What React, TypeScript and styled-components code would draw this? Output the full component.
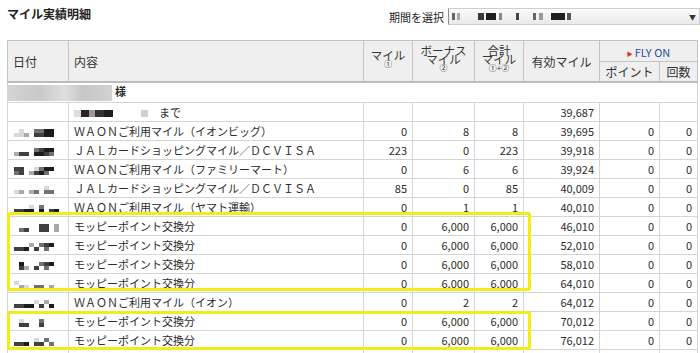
import React from "react";
import styled, { createGlobalStyle } from "styled-components";

const GlobalStyle = createGlobalStyle`
  html, body {
    margin: 0;
    padding: 0;
    background: #fff;
  }
  body {
    font-family: "Noto Sans CJK JP", "Noto Sans", sans-serif;
    color: #2b2b2b;
  }
`;

const SHADES: Record<string, string> = {
  " ": "transparent",
  "1": "#d9d9d9",
  "2": "#a9a9a9",
  "3": "#717171",
  "4": "#404040",
  "5": "#1c1c1c",
};

interface RowType {
  top: string;
  bottom: string;
  text: string;
  mile: string;
  bonus: string;
  total: string;
  valid: string;
}

const rows: Array<RowType> = [
  { top: " 1  3355 ", bottom: "112 4455 ", text: "ＷＡＯＮご利用マイル（イオンビッグ）", mile: "0", bonus: "8", total: "8", valid: "39,695" },
  { top: "    3455 ", bottom: "244 5543 ", text: "ＪＡＬカードショッピングマイル／ＤＣＶＩＳＡ", mile: "223", bonus: "0", total: "223", valid: "39,918" },
  { top: "44  1355 ", bottom: "34 2453  ", text: "ＷＡＯＮご利用マイル（ファミリーマート）", mile: "0", bonus: "6", total: "6", valid: "39,924" },
  { top: "      1  ", bottom: "12 23 33 ", text: "ＪＡＬカードショッピングマイル／ＤＣＶＩＳＡ", mile: "85", bonus: "0", total: "85", valid: "40,009" },
  { top: "   1 3   ", bottom: "4455 5 45", text: "ＷＡＯＮご利用マイル（ヤマト運輸）", mile: "0", bonus: "1", total: "1", valid: "40,010" },
  { top: "     44 2", bottom: " 34  44 2", text: "モッピーポイント交換分", mile: "0", bonus: "6,000", total: "6,000", valid: "46,010" },
  { top: "   2 345 ", bottom: "445 4 3  ", text: "モッピーポイント交換分", mile: "0", bonus: "6,000", total: "6,000", valid: "52,010" },
  { top: " 5   345 ", bottom: " 42 4 3  ", text: "モッピーポイント交換分", mile: "0", bonus: "6,000", total: "6,000", valid: "58,010" },
  { top: "1        ", bottom: " 21 33 2 ", text: "モッピーポイント交換分", mile: "0", bonus: "6,000", total: "6,000", valid: "64,010" },
  { top: "    1 2  ", bottom: "4455 4 5 ", text: "ＷＡＯＮご利用マイル（イオン）", mile: "0", bonus: "2", total: "2", valid: "64,012" },
  { top: " 1   3   ", bottom: " 44  4   ", text: "モッピーポイント交換分", mile: "0", bonus: "6,000", total: "6,000", valid: "70,012" },
  { top: "    1 3  ", bottom: "445 44 3 ", text: "モッピーポイント交換分", mile: "0", bonus: "6,000", total: "6,000", valid: "76,012" },
  { top: " 2  3 44 ", bottom: "23  3 44 ", text: "ＷＡＯＮご利用マイル（イオン）", mile: "0", bonus: "3", total: "3", valid: "76,015" },
];

const Page = styled.div`
  width: 693px;
  padding-left: 7px;
`;

const TitleBar = styled.div`
  height: 40px;
  display: flex;
  justify-content: space-between;
  align-items: flex-start;
`;

const Title = styled.h1`
  margin: 6px 0 0;
  font-size: 12px;
  line-height: 16px;
  font-weight: bold;
  color: #222;
`;

const Period = styled.div`
  margin-top: 8px;
  display: flex;
  align-items: center;
`;

const PeriodLabel = styled.span`
  font-size: 11px;
  line-height: 16px;
  margin-right: 4px;
  color: #222;
`;

const SelectBox = styled.div`
  width: 244px;
  height: 15px;
  display: flex;
  align-items: center;
  padding: 0 3px;
  border: 1px solid #cfcfcf;
  border-left-color: #8d8d8d;
  background: linear-gradient(#fbfbfb, #e9e9e9);
`;

const SelectText = styled.span`
  flex: 1;
  display: flex;
  align-items: center;
`;

const Arrow = styled.span`
  font-size: 7px;
  color: #333;
`;

const Blot = styled.span<{ $w: number; $shade: string; $gap?: number }>`
  display: inline-block;
  width: ${(p) => p.$w}px;
  height: 7px;
  margin-right: ${(p) => p.$gap ?? 0}px;
  background: ${(p) => p.$shade};
  vertical-align: middle;
`;

const Mosaic = styled.span`
  display: inline-grid;
  grid-auto-flow: column;
  grid-template-rows: 4px 4px;
  grid-auto-columns: 5px;
  vertical-align: middle;
`;

const Tile = styled.span<{ $shade: string }>`
  background: ${(p) => p.$shade};
`;

const TableWrap = styled.div`
  position: relative;
  width: 690px;
`;

const Table = styled.table`
  width: 690px;
  border-collapse: collapse;
  table-layout: fixed;
  font-size: 11px;
  border: 1px solid #c4c4c4;
`;

const HeadCell = styled.th<{ $align?: string }>`
  background: #efefef;
  border: 1px solid #c4c4c4;
  border-bottom: 2px solid #bcbcbc;
  padding: 0 5px;
  font-size: 12px;
  font-weight: normal;
  color: #333;
  text-align: ${(p) => p.$align ?? "center"};
  vertical-align: middle;
  white-space: nowrap;
`;

const SubHeadCell = styled(HeadCell)`
  border-bottom: 1px solid #c4c4c4;
  height: 19px;
  padding: 0;
`;

const Stack = styled.span`
  display: inline-flex;
  flex-direction: column;
  align-items: center;
  margin-bottom: 9px;
  font-size: 11.5px;
  line-height: 9px;
`;

const Mark = styled.span`
  font-size: 8px;
  line-height: 8px;
`;

const FlyOn = styled.span`
  color: #2d4c9c;
  font-size: 11px;
`;

const FlyArrow = styled.span`
  color: #d23a2a;
  font-size: 6px;
  margin-right: 2px;
  vertical-align: 1px;
`;

const Row = styled.tr<{ $h: number }>`
  height: ${(p) => p.$h}px;
`;

const Cell = styled.td<{ $num?: boolean }>`
  border: 1px solid #d4d4d4;
  padding: 0 5px;
  text-align: ${(p) => (p.$num ? "right" : "left")};
  white-space: nowrap;
  overflow: hidden;
  line-height: 16px;
  color: #2b2b2b;
`;

const DateCell = styled(Cell)`
  padding-left: 6px;
`;

const NameCell = styled.td`
  border: 1px solid #d4d4d4;
  padding: 0;
  font-weight: bold;
`;

const NameBlur = styled.span`
  display: inline-block;
  width: 104px;
  height: 16px;
  margin-right: 3px;
  vertical-align: middle;
  background: linear-gradient(90deg, #d4d4d4, #c9c9c9 30%, #dedede 55%, #c6c6c6 72%, #d2d2d2);
`;

const Highlight = styled.div<{ $top: number; $height: number }>`
  position: absolute;
  left: 0;
  top: ${(p) => p.$top}px;
  width: 524px;
  height: ${(p) => p.$height}px;
  box-sizing: border-box;
  border: 3px solid #f3ec1c;
  border-radius: 3px;
  pointer-events: none;
`;

const DateBlur: React.FC<{ top: string; bottom: string }> = ({ top, bottom }) => (
  <Mosaic>
    {top.split("").map((c, i) => [
      <Tile key={`t${i}`} $shade={SHADES[c]} />,
      <Tile key={`b${i}`} $shade={SHADES[bottom[i] ?? " "]} />,
    ])}
  </Mosaic>
);

const App: React.FC = () => {
  return (
    <Page>
      <GlobalStyle />
      <TitleBar>
        <Title>マイル実績明細</Title>
        <Period>
          <PeriodLabel>期間を選択</PeriodLabel>
          <SelectBox>
            <SelectText>
              <Blot $w={3} $shade="#666" $gap={2} />
              <Blot $w={3} $shade="#aaa" $gap={18} />
              <Blot $w={6} $shade="#3a3a3a" $gap={2} />
              <Blot $w={10} $shade="#1e1e1e" $gap={3} />
              <Blot $w={3} $shade="#888" $gap={14} />
              <Blot $w={3} $shade="#444" $gap={14} />
              <Blot $w={3} $shade="#666" $gap={3} />
              <Blot $w={4} $shade="#999" $gap={8} />
              <Blot $w={14} $shade="#1e1e1e" $gap={2} />
              <Blot $w={4} $shade="#555" />
            </SelectText>
            <Arrow>▼</Arrow>
          </SelectBox>
        </Period>
      </TitleBar>
      <TableWrap>
        <Table>
          <colgroup>
            <col style={{ width: 61 }} />
            <col style={{ width: 295 }} />
            <col style={{ width: 49 }} />
            <col style={{ width: 62 }} />
            <col style={{ width: 49 }} />
            <col style={{ width: 76 }} />
            <col style={{ width: 60 }} />
            <col style={{ width: 38 }} />
          </colgroup>
          <thead>
            <Row $h={21}>
              <HeadCell rowSpan={2} $align="left">
                日付
              </HeadCell>
              <HeadCell rowSpan={2} $align="left">
                内容
              </HeadCell>
              <HeadCell rowSpan={2}>
                <Stack>
                  <span>マイル</span>
                  <Mark>①</Mark>
                </Stack>
              </HeadCell>
              <HeadCell rowSpan={2}>
                <Stack>
                  <span>ボーナス</span>
                  <span>マイル</span>
                  <Mark>②</Mark>
                </Stack>
              </HeadCell>
              <HeadCell rowSpan={2}>
                <Stack>
                  <span>合計</span>
                  <span>マイル</span>
                  <Mark>①+②</Mark>
                </Stack>
              </HeadCell>
              <HeadCell rowSpan={2}>有効マイル</HeadCell>
              <SubHeadCell colSpan={2}>
                <FlyArrow>▶</FlyArrow>
                <FlyOn>FLY ON</FlyOn>
              </SubHeadCell>
            </Row>
            <Row $h={20}>
              <HeadCell>ポイント</HeadCell>
              <HeadCell>回数</HeadCell>
            </Row>
          </thead>
          <tbody>
            <Row $h={20}>
              <NameCell colSpan={8}>
                <NameBlur />様
              </NameCell>
            </Row>
            <Row $h={19}>
              <Cell />
              <Cell>
                <Blot $w={7} $shade="#dedede" />
                <Blot $w={8} $shade="#2c2424" />
                <Blot $w={6} $shade="#9a9a9a" />
                <Blot $w={9} $shade="#333" />
                <Blot $w={9} $shade="#1e1e1e" $gap={28} />
                <Blot $w={7} $shade="#cfcfcf" $gap={11} />
                まで
              </Cell>
              <Cell />
              <Cell />
              <Cell />
              <Cell $num>39,687</Cell>
              <Cell />
              <Cell />
            </Row>
            {rows.map((row, i) => (
              <Row $h={19} key={i}>
                <DateCell>
                  <DateBlur top={row.top} bottom={row.bottom} />
                </DateCell>
                <Cell>{row.text}</Cell>
                <Cell $num>{row.mile}</Cell>
                <Cell $num>{row.bonus}</Cell>
                <Cell $num>{row.total}</Cell>
                <Cell $num>{row.valid}</Cell>
                <Cell $num>0</Cell>
                <Cell $num>0</Cell>
              </Row>
            ))}
          </tbody>
        </Table>
        <Highlight $top={172} $height={79} />
        <Highlight $top={271} $height={39} />
      </TableWrap>
    </Page>
  );
};

export default App;
